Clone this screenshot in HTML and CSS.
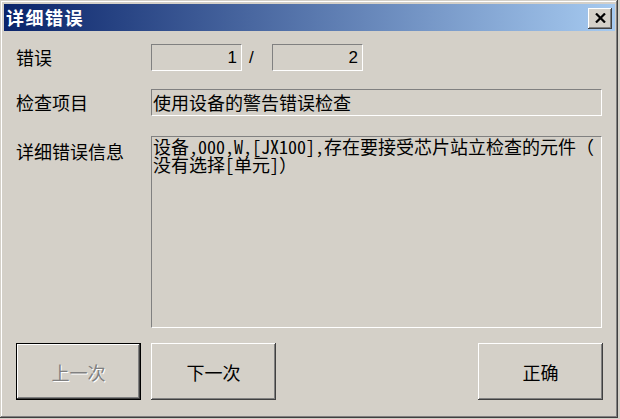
FILE: index.html
```html
<!DOCTYPE html>
<html lang="zh-CN">
<head>
  <meta charset="UTF-8" />
  <title>详细错误</title>
  <link rel="stylesheet" href="styles.css">
</head>
<body>
  <div class="window">
    <div class="titlebar">
      <span class="title">详细错误</span>
      <button class="close" title="关闭">
        <svg width="11" height="10" viewBox="0 0 11 10">
          <path d="M1 0.5 L10 9.5 M10 0.5 L1 9.5" stroke="#000" stroke-width="2.2" fill="none"/>
        </svg>
      </button>
    </div>

    <div class="content">
      <div class="label">错误</div>
      <div class="count">
        <div class="field num">1</div>
        <span class="slash">/</span>
        <div class="field num">2</div>
      </div>

      <div class="label row-item">检查项目</div>
      <div class="field item">使用设备的警告错误检查</div>

      <div class="label row-detail">详细错误信息</div>
      <div class="field detail">设备,000,W,[JX100],存在要接受芯片站立检查的元件（<br>没有选择[单元]）</div>

      <div class="buttons">
        <button class="btn default" disabled>上一次</button>
        <button class="btn">下一次</button>
        <button class="btn ok">正确</button>
      </div>
    </div>
  </div>
</body>
</html>
```

FILE: styles.css
```css
:root {
  --face: #d4d0c8;
  --shadow: #808080;
  --dark: #404040;
  --light: #ffffff;
}

* {
  box-sizing: border-box;
}

body {
  margin: 0;
  background: var(--face);
  font-family: "Noto Sans CJK SC", "Liberation Sans", sans-serif;
  font-size: 18px;
  color: #000;
}

.window {
  width: 618px;
  height: 418px;
  padding: 4px 3px 3px 4px;
  background: var(--face);
  box-shadow:
    inset -1px -1px var(--dark),
    inset 1px 1px var(--face),
    inset -2px -2px var(--shadow),
    inset 2px 2px var(--light);
}

/* title bar */
.titlebar {
  height: 27px;
  display: flex;
  align-items: center;
  justify-content: space-between;
  padding: 0 3px 0 2px;
  background: linear-gradient(to right, #0a246a, #a6caf0);
}

.title {
  color: #fff;
  font-weight: bold;
  font-size: 18px;
  line-height: 27px;
  letter-spacing: 1.5px;
}

.close {
  width: 24px;
  height: 21px;
  margin-top: 1px;
  padding: 0;
  border: none;
  background: var(--face);
  display: flex;
  align-items: center;
  justify-content: center;
  box-shadow:
    inset -1px -1px var(--dark),
    inset 1px 1px var(--light),
    inset -2px -2px var(--shadow);
}

/* dialog body */
.content {
  display: grid;
  grid-template-columns: 135px 451px;
  align-items: start;
  padding: 13px 0 0 12px;
}

.label {
  line-height: 27px;
}

.row-item {
  margin-top: 18px;
}

.row-detail {
  margin-top: 20px;
  padding-top: 2px;
}

.field {
  background: var(--face);
  border-top: 1px solid var(--shadow);
  border-left: 1px solid var(--shadow);
  border-bottom: 1px solid var(--light);
  border-right: 1px solid var(--light);
}

.count {
  display: flex;
  align-items: center;
  height: 27px;
}

.num {
  width: 91px;
  height: 27px;
  text-align: right;
  padding-right: 4px;
  font-family: "Liberation Sans", sans-serif;
  font-size: 17px;
  line-height: 25px;
}

.slash {
  width: 30px;
  padding-left: 7px;
  font-family: "Liberation Sans", sans-serif;
  font-size: 17px;
}

.item {
  margin-top: 18px;
  height: 27px;
  padding-left: 1px;
  line-height: 25px;
}

.detail {
  margin-top: 20px;
  height: 192px;
  padding: 0 1px;
  font-family: "Noto Sans Mono CJK SC", "Noto Sans CJK SC", monospace;
  font-size: 18px;
  line-height: 18px;
}

/* buttons */
.buttons {
  grid-column: 1 / 3;
  margin-top: 15px;
  display: flex;
  height: 57px;
}

.btn {
  width: 125px;
  height: 57px;
  border: none;
  background: var(--face);
  font-family: inherit;
  font-size: 18px;
  color: #000;
  box-shadow:
    inset -1px -1px var(--dark),
    inset 1px 1px var(--light),
    inset -2px -2px var(--shadow);
}

.btn + .btn {
  margin-left: 10px;
}

.btn.ok {
  margin-left: auto;
  margin-right: -1px;
}

.btn.default {
  border: 1px solid #000;
  color: var(--shadow);
  text-shadow: 1px 1px var(--light);
}
```
